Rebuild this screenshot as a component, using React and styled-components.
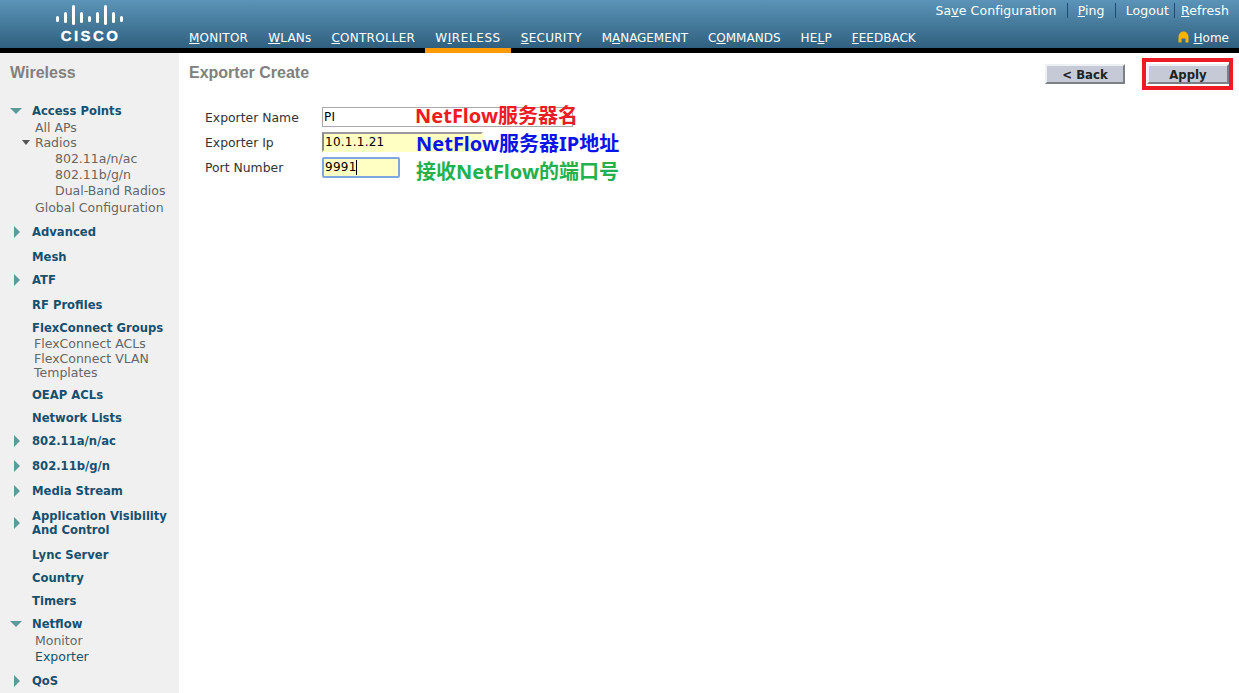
import styled, { createGlobalStyle } from "styled-components";

const GlobalStyle = createGlobalStyle`
  html, body {
    margin: 0;
    height: 693px;
    overflow: hidden;
    background: #fff;
    font-family: "DejaVu Sans", Verdana, sans-serif;
  }
  * {
    box-sizing: border-box;
  }
`;

const Header = styled.header`
  height: 53px;
  display: flex;
  background: linear-gradient(#5b94b8, #30607f) no-repeat top / 100% 48px, #000;
  color: #fff;
`;

const Brand = styled.div`
  width: 179px;
  height: 48px;
  display: flex;
  flex-direction: column;
  align-items: center;
  padding-top: 5px;
`;

const BrandName = styled.div`
  font: bold 15px/15px "Liberation Sans", sans-serif;
  letter-spacing: 2.4px;
  -webkit-text-stroke: 0.3px #fff;
  margin-top: 3px;
  padding-left: 2px;
`;

const HeaderBody = styled.div`
  flex: 1;
  display: flex;
  flex-direction: column;
`;

const Utility = styled.div`
  height: 28px;
  display: flex;
  justify-content: flex-end;
  align-items: center;
  padding: 0 10px 7px 0;
  font-size: 12.5px;
  letter-spacing: 0.1px;
`;

const UtilityLink = styled.span`
  padding: 0 10px;
  border-left: ${(props) => (props.$sep ? "1px solid #1d4a72" : "none")};
  &:nth-child(3) {
    padding-right: 5px;
  }
  &:last-child {
    padding: 0 0 0 6px;
  }
`;

const NavRow = styled.nav`
  height: 25px;
  display: flex;
  align-items: flex-start;
  font-size: 12px;
`;

const NavItem = styled.div`
  height: 25px;
  padding: 3px 10px 0;
  line-height: 15px;
  white-space: nowrap;
  letter-spacing: ${(props) => props.$spacing}px;
  border-bottom: 5px solid ${(props) => (props.$active ? "#ff9900" : "transparent")};
`;

const HomeLink = styled.div`
  margin-left: auto;
  padding: 3px 10px 0 0;
  line-height: 15px;
  display: flex;
  align-items: center;
  gap: 5px;
`;

const HomeGlyph = styled.svg`
  margin-top: -3px;
`;

const Page = styled.div`
  display: flex;
  height: 640px;
  overflow: hidden;
`;

const Sidebar = styled.aside`
  width: 179px;
  flex: none;
  background: #f0f0f0;
  padding-top: 10px;
`;

const SectionTitle = styled.h1`
  margin: 0;
  font: bold 16px/20px "Liberation Sans", sans-serif;
  color: #808080;
  padding-left: ${(props) => props.$left}px;
`;

const Head = styled.div`
  display: flex;
  align-items: center;
  margin-top: ${(props) => props.$top}px;
  padding-right: 8px;
`;

const ArrowSlot = styled.span`
  width: 32px;
  flex: none;
  display: flex;
  justify-content: ${(props) => (props.$open ? "flex-start" : "center")};
  padding-left: ${(props) => (props.$open ? "10px" : "2px")};
`;

const ArrowRight = styled.i`
  width: 0;
  height: 0;
  border-left: 6px solid #5d9a9c;
  border-top: 6px solid transparent;
  border-bottom: 6px solid transparent;
`;

const ArrowDown = styled.i`
  width: 0;
  height: 0;
  border-top: 6px solid #5d9a9c;
  border-left: 6px solid transparent;
  border-right: 6px solid transparent;
`;

const RadioArrow = styled.i`
  width: 0;
  height: 0;
  margin-right: 5px;
  border-top: 5px solid #555;
  border-left: 4px solid transparent;
  border-right: 4px solid transparent;
`;

const HeadLabel = styled.span`
  font-size: 11.6px;
  font-weight: bold;
  line-height: 14px;
  color: #17506f;
`;

const Sub = styled.div`
  display: flex;
  align-items: center;
  margin-top: ${(props) => props.$top}px;
  padding-left: ${(props) => props.$left}px;
  font-size: 12.5px;
  line-height: ${(props) => props.$line || 15}px;
  color: ${(props) => (props.$current ? "#17506f" : "#666")};
`;

const Content = styled.main`
  flex: 1;
  padding: 10px 10px 0 10px;
`;

const TitleBar = styled.div`
  display: flex;
  justify-content: space-between;
  align-items: flex-start;
`;

const Actions = styled.div`
  display: flex;
  align-items: center;
  gap: 17px;
  margin-top: -5px;
  margin-right: -4px;
`;

const ActionButton = styled.button`
  height: 20px;
  width: ${(props) => props.$width}px;
  padding: 1px 0 0;
  background: #c6c9d6;
  border: 2px solid;
  border-color: #eef0f4 #7d7f86 #7d7f86 #eef0f4;
  font: bold 11.7px/14px "DejaVu Sans", sans-serif;
  color: #222;
`;

const Highlight = styled.div`
  padding: 2px 0 2px 1px;
  border: 4px solid #ed1c24;
  display: flex;
`;

const Form = styled.div`
  margin-top: 17px;
  padding-left: 16px;
  display: flex;
  flex-direction: column;
  gap: 5px;
`;

const FormRow = styled.div`
  height: 20px;
  display: flex;
  align-items: center;
  position: relative;
`;

const FieldLabel = styled.label`
  width: 117px;
  font-size: 12.4px;
  color: #333;
`;

const FieldWrap = styled.div`
  position: relative;
  display: flex;
`;

const Field = styled.input`
  width: ${(props) => props.$width}px;
  height: ${(props) => props.$height || 20}px;
  padding: 0 1px;
  outline: none;
  font: 12px "DejaVu Sans", sans-serif;
  letter-spacing: 0.25px;
  color: #000;
  background: ${(props) => (props.$plain ? "#fff" : "#ffffc4")};
  border: ${(props) =>
    props.$focus ? "2px solid #7ea6e0" : props.$plain ? "1px solid #a9a9a9" : "2px solid"};
  border-color: ${(props) =>
    props.$focus ? "#7ea6e0" : props.$plain ? "#a9a9a9" : "#9a9a9a #ffffc4 #ffffc4 #8a8a8a"};
  border-radius: ${(props) => (props.$focus ? "2px" : "0")};
`;

const Caret = styled.span`
  position: absolute;
  left: 34px;
  top: 3px;
  width: 1px;
  height: 15px;
  background: #000;
`;

const Note = styled.span`
  position: absolute;
  left: ${(props) => props.$left}px;
  top: ${(props) => props.$top}px;
  font: bold 20px/24px "Noto Sans", "Noto Sans CJK SC", sans-serif;
  color: ${(props) => props.$color};
  white-space: nowrap;
`;

const navItems = [
  { pre: "", key: "M", post: "ONITOR", spacing: 0.25 },
  { pre: "", key: "W", post: "LANs", spacing: 0.2 },
  { pre: "", key: "C", post: "ONTROLLER", spacing: 0.25 },
  { pre: "W", key: "I", post: "RELESS", spacing: 0.6, active: true },
  { pre: "", key: "S", post: "ECURITY", spacing: 0.25 },
  { pre: "M", key: "A", post: "NAGEMENT", spacing: -0.05 },
  { pre: "C", key: "O", post: "MMANDS", spacing: 0 },
  { pre: "HE", key: "L", post: "P", spacing: 0.2 },
  { pre: "", key: "F", post: "EEDBACK", spacing: 0 },
];

const menu = [
  { head: "Access Points", top: 21, arrow: "down" },
  { sub: "All APs", top: 2, left: 35 },
  { sub: "Radios", top: 0, left: 22, radio: true },
  { sub: "802.11a/n/ac", top: 1, left: 55 },
  { sub: "802.11b/g/n", top: 1, left: 55 },
  { sub: "Dual-Band Radios", top: 1, left: 55 },
  { sub: "Global Configuration", top: 2, left: 35 },
  { head: "Advanced", top: 10, arrow: "right" },
  { head: "Mesh", top: 11 },
  { head: "ATF", top: 9, arrow: "right" },
  { head: "RF Profiles", top: 11 },
  { head: "FlexConnect Groups", top: 9 },
  { sub: "FlexConnect ACLs", top: 1, left: 34 },
  { sub: "FlexConnect VLAN Templates", top: 1, left: 34, line: 14 },
  { head: "OEAP ACLs", top: 8 },
  { head: "Network Lists", top: 9 },
  { head: "802.11a/n/ac", top: 9, arrow: "right" },
  { head: "802.11b/g/n", top: 11, arrow: "right" },
  { head: "Media Stream", top: 11, arrow: "right" },
  { head: "Application Visibility And Control", top: 11, arrow: "right" },
  { head: "Lync Server", top: 11 },
  { head: "Country", top: 9 },
  { head: "Timers", top: 9 },
  { head: "Netflow", top: 9, arrow: "down" },
  { sub: "Monitor", top: 2, left: 35 },
  { sub: "Exporter", top: 1, left: 35, current: true },
  { head: "QoS", top: 10, arrow: "right" },
];

function CiscoBars() {
  const bars = [
    [0, 11, 6],
    [8, 7, 11],
    [16, 0, 20],
    [24, 7, 11],
    [32, 11, 6],
    [40, 7, 11],
    [48, 0, 20],
    [56, 7, 11],
    [64, 11, 6],
  ];
  return (
    <svg width="67" height="20" viewBox="0 0 67 20">
      {bars.map(([x, y, h]) => (
        <rect key={x} x={x} y={y} width="3" height={h} rx="1.5" fill="#fff" />
      ))}
    </svg>
  );
}

function HomeIcon() {
  return (
    <HomeGlyph width="11" height="12" viewBox="0 0 11 12">
      <path
        d="M5.5 0.5 C8.5 0.5 10.5 3 10.5 6 V11.5 H7.5 V7.5 H3.5 V11.5 H0.5 V6 C0.5 3 2.5 0.5 5.5 0.5 Z"
        fill="#f5b400"
      />
    </HomeGlyph>
  );
}

export default function App() {
  return (
    <>
      <GlobalStyle />
      <Header>
        <Brand>
          <CiscoBars />
          <BrandName>CISCO</BrandName>
        </Brand>
        <HeaderBody>
          <Utility>
            <UtilityLink>
              Sa<u>v</u>e Configuration
            </UtilityLink>
            <UtilityLink $sep>
              <u>P</u>ing
            </UtilityLink>
            <UtilityLink $sep>
              Lo<u>g</u>out
            </UtilityLink>
            <UtilityLink $sep>
              <u>R</u>efresh
            </UtilityLink>
          </Utility>
          <NavRow>
            {navItems.map((item) => (
              <NavItem key={item.post} $active={item.active} $spacing={item.spacing}>
                {item.pre}
                <u>{item.key}</u>
                {item.post}
              </NavItem>
            ))}
            <HomeLink>
              <HomeIcon />
              <span>
                <u>H</u>ome
              </span>
            </HomeLink>
          </NavRow>
        </HeaderBody>
      </Header>
      <Page>
        <Sidebar>
          <SectionTitle $left={10}>Wireless</SectionTitle>
          {menu.map((item) =>
            item.head ? (
              <Head key={item.head} $top={item.top}>
                <ArrowSlot $open={item.arrow === "down"}>
                  {item.arrow === "down" && <ArrowDown />}
                  {item.arrow === "right" && <ArrowRight />}
                </ArrowSlot>
                <HeadLabel>{item.head}</HeadLabel>
              </Head>
            ) : (
              <Sub
                key={item.sub}
                $top={item.top}
                $left={item.left}
                $line={item.line}
                $current={item.current}
              >
                {item.radio && <RadioArrow />}
                {item.sub}
              </Sub>
            )
          )}
        </Sidebar>
        <Content>
          <TitleBar>
            <SectionTitle $left={0}>Exporter Create</SectionTitle>
            <Actions>
              <ActionButton $width={80}>&lt; Back</ActionButton>
              <Highlight>
                <ActionButton $width={82}>Apply</ActionButton>
              </Highlight>
            </Actions>
          </TitleBar>
          <Form>
            <FormRow>
              <FieldLabel>Exporter Name</FieldLabel>
              <FieldWrap>
                <Field $plain $width={251} defaultValue="PI" readOnly />
              </FieldWrap>
              <Note $left={210} $top={-3} $color="#ed1c24">
                NetFlow服务器名
              </Note>
            </FormRow>
            <FormRow>
              <FieldLabel>Exporter Ip</FieldLabel>
              <FieldWrap>
                <Field $width={161} defaultValue="10.1.1.21" readOnly />
              </FieldWrap>
              <Note $left={211} $top={0} $color="#0a14e6">
                NetFlow服务器IP地址
              </Note>
            </FormRow>
            <FormRow>
              <FieldLabel>Port Number</FieldLabel>
              <FieldWrap>
                <Field $focus $width={78} $height={21} defaultValue="9991" readOnly />
                <Caret />
              </FieldWrap>
              <Note $left={211} $top={3} $color="#22b14c">
                接收NetFlow的端口号
              </Note>
            </FormRow>
          </Form>
        </Content>
      </Page>
    </>
  );
}
